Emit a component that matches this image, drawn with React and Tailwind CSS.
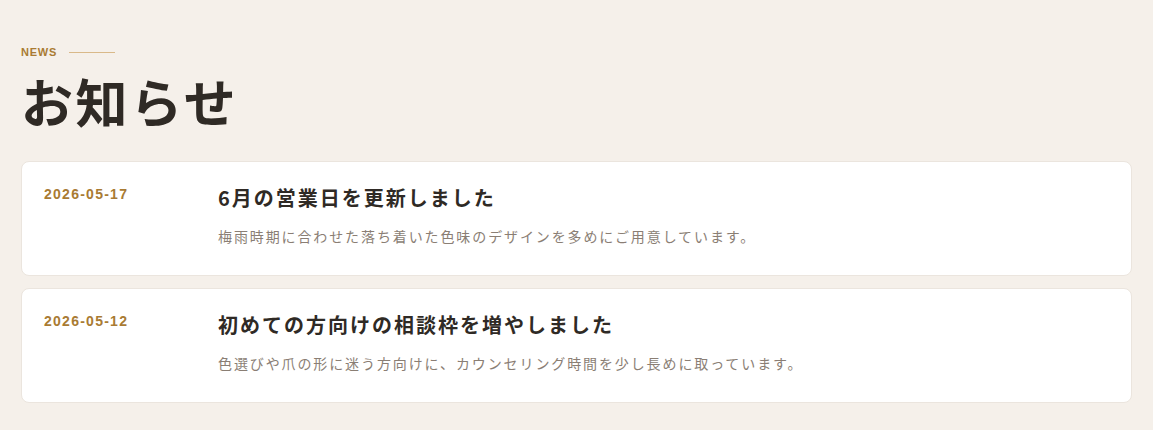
const news = [
  {
    date: '2026-05-17',
    title: '6月の営業日を更新しました',
    body: '梅雨時期に合わせた落ち着いた色味のデザインを多めにご用意しています。',
  },
  {
    date: '2026-05-12',
    title: '初めての方向けの相談枠を増やしました',
    body: '色選びや爪の形に迷う方向けに、カウンセリング時間を少し長めに取っています。',
  },
];

const jp = { fontFamily: '"Noto Sans CJK JP", "Noto Sans", sans-serif' };
const latin = { fontFamily: '"Liberation Sans", Arial, sans-serif' };

export default function App() {
  return (
    <div className="min-h-[430px] bg-[#f5f0ea] px-[21px] pt-[44px] pb-8" style={jp}>
      <div className="flex items-center gap-3">
        <span className="text-[11px] leading-4 font-bold tracking-[0.07em] text-[#a97b33]" style={latin}>NEWS</span>
        <span className="block h-px w-[46px] bg-[#d9b989]" />
      </div>
      <h1 className="mt-[10px] text-[52px] leading-[62px] font-bold tracking-[0.05em] text-[#2f2a25]">お知らせ</h1>

      <div className="mt-[29px] flex flex-col gap-3">
        {news.map((n) => (
          <article key={n.date} className="grid grid-cols-[174px_1fr] rounded-lg border border-[#ebe5de] bg-white pl-[22px] pr-6 pt-[21px] pb-[27px]">
            <p className="mt-[1px] text-[14px] leading-5 font-bold tracking-[0.09em] text-[#a97b33]" style={latin}>{n.date}</p>
            <div>
              <h2 className="text-[20px] leading-[30px] font-bold tracking-[0.1em] text-[#2f2a25]">{n.title}</h2>
              <p className="mt-[11px] text-[14px] leading-6 tracking-[0.135em] text-[#8a7e74]">{n.body}</p>
            </div>
          </article>
        ))}
      </div>
    </div>
  );
}
